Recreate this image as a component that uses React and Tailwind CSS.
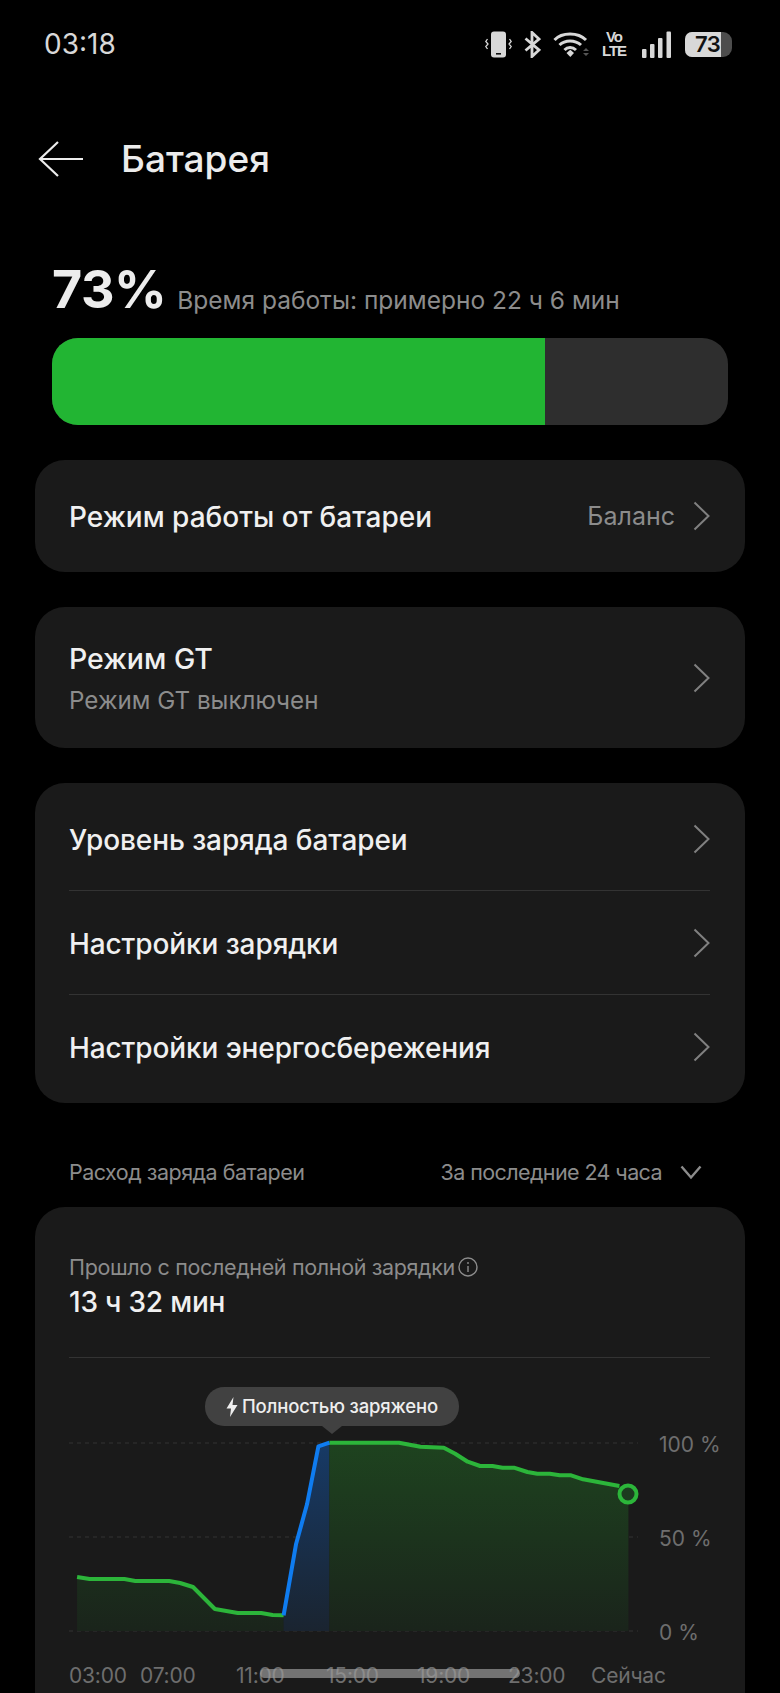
const toPoints = (list) =>
  list.map(([x, y]) => `${(x / 2.01 - 69).toFixed(1)},${(1370 + y / 3 - 1430).toFixed(1)}`).join(" ");

const greenA = [[155,618],[180,624],[250,624],[272,630],[340,630],[362,636],[388,648],[432,714],[478,726],[525,726],[548,732],[570,733]];
const blue = [[570,733],[595,520],[617,400],[640,226],[662,215]];
const greenB = [[662,215],[802,215],[845,227],[892,230],[915,248],[940,272],[965,285],[990,285],[1010,290],[1033,290],[1060,303],[1080,308],[1105,308],[1125,313],[1148,313],[1172,325],[1245,345],[1263,370]];

const closeArea = (list) => {
  const first = list[0][0] / 2.01 - 69;
  const last = list[list.length - 1][0] / 2.01 - 69;
  return `${first.toFixed(1)},200 ${toPoints(list)} ${last.toFixed(1)},200`;
};

function Chevron() {
  return (
    <svg width="17" height="30" viewBox="0 0 17 30" fill="none" stroke="#808080" strokeWidth="2" className="shrink-0">
      <path d="M1.500 1.500 L15.500 15 L1.500 28.500" />
    </svg>
  );
}

function Row({ title }) {
  return (
    <div className="flex h-[104px] items-center justify-between">
      <span className="pt-[2px] text-[28px] font-medium tracking-[-0.1px] text-[#f0f0f0]">{title}</span>
      <Chevron />
    </div>
  );
}

function StatusIcons() {
  return (
    <div className="flex items-center text-[#d8d8d8]">
      <svg width="27" height="27" viewBox="0 0 27 27" fill="none">
        <rect x="6" y="0.5" width="15" height="26" rx="3" fill="#d8d8d8" />
        <rect x="11" y="22" width="5" height="1.6" fill="#111" />
        <path d="M2.5 8 L0.8 10.5 L3 13 L0.8 15.5 L2.5 18 M24.5 8 L26.2 10.5 L24 13 L26.2 15.5 L24.5 18" stroke="#d8d8d8" strokeWidth="1.3" />
      </svg>
      <svg className="ml-3" width="17" height="27" viewBox="0 0 17 27" fill="none">
        <path d="M1.5 7.5 L15 19 L8 25.5 L8 1.5 L15 8 L1.5 19.5" stroke="#d8d8d8" strokeWidth="2.8" />
      </svg>
      <svg className="ml-3" width="37" height="27" viewBox="0 0 37 27" fill="none">
        <path d="M1.5 9 C9 1 25 1 33 9" stroke="#d8d8d8" strokeWidth="3" />
        <path d="M6.5 14 C12 8.500 22 8.500 28 14" stroke="#d8d8d8" strokeWidth="3" />
        <path d="M11.500 19 C14.500 15.800 19.500 15.800 23 19" stroke="#d8d8d8" strokeWidth="3" />
        <path d="M13.500 22 L17.300 18.800 L21 22 L17.300 26 Z" fill="#d8d8d8" />
        <path d="M30 20 L33 17 L36 20 Z M30 22 L36 22 L33 25 Z" fill="#555" />
      </svg>
      <div className="ml-3 flex w-[24px] flex-col items-center font-['Liberation_Sans',sans-serif] text-[15px] leading-[14px] font-bold tracking-[-1px]">
        <span>Vo</span>
        <span>LTE</span>
      </div>
      <svg className="ml-4" width="29" height="27" viewBox="0 0 29 27" fill="#d8d8d8">
        <rect x="0" y="18" width="4.500" height="9" rx="1" />
        <rect x="8" y="13" width="4.500" height="14" rx="1" />
        <rect x="16" y="7" width="4.500" height="20" rx="1" />
        <rect x="24.500" y="0.500" width="4.500" height="26.500" rx="1" />
      </svg>
      <div className="relative ml-[14px] flex h-[25px] w-[47px] items-center overflow-hidden rounded-l-[7px] rounded-r-[9px] bg-[#4d4d4d]">
        <div className="h-full w-[36px] bg-[#d8d8d8]" />
        <span className="absolute left-[10px] text-[22px] leading-none font-semibold tracking-[-0.5px] text-[#111]">73</span>
      </div>
    </div>
  );
}

export default function App() {
  return (
    <div className="h-[1693px] w-[780px] overflow-hidden bg-black font-['Inter',sans-serif]">
      <div className="flex items-center justify-between pt-[28px] pr-[48px] pl-[44px]">
        <span className="text-[28px] leading-8 text-[#d8d8d8]">03:18</span>
        <StatusIcons />
      </div>

      <div className="mt-[77px] flex items-center pl-[38px]">
        <svg width="46" height="36" viewBox="0 0 46 36" fill="none" stroke="#ececec" strokeWidth="2.2">
          <path d="M45 18 L2 18 M20 1 L2 18 L20 35" />
        </svg>
        <h1 className="ml-[37px] text-[37px] leading-[44px] font-medium text-[#ececec]">Батарея</h1>
      </div>

      <div className="mt-[79px] flex items-end px-[52px]">
        <span className="mb-[2px] text-[52px] leading-[60px] font-bold tracking-[-0.5px] text-[#ececec]">73%</span>
        <span className="mb-[6px] ml-[11px] text-[24.5px] leading-8 text-[#8c8c8c]">Время работы: примерно 22 ч 6 мин</span>
      </div>
      <div className="mx-[52px] mt-[16px] h-[87px] overflow-hidden rounded-[26px] bg-[#2e2e2e]">
        <div className="h-full w-[493px] bg-[#22b533]" />
      </div>

      <div className="mx-[35px] mt-[35px] flex flex-col gap-[35px]">
        <div className="flex h-[112px] items-center justify-between rounded-[30px] bg-[#1a1a1a] pr-[35px] pl-[34px]">
          <span className="pt-[2px] text-[28px] font-medium text-[#f0f0f0]">Режим работы от батареи</span>
          <div className="flex items-center gap-[18px]">
            <span className="pt-[2px] text-[25px] text-[#8c8c8c]">Баланс</span>
            <Chevron />
          </div>
        </div>

        <div className="flex h-[141px] items-center justify-between rounded-[30px] bg-[#1a1a1a] pr-[35px] pl-[34px]">
          <div className="pt-[3px]">
            <div className="text-[28.500px] leading-[40px] font-medium text-[#f0f0f0]">Режим GT</div>
            <div className="mt-[4px] text-[24.2px] leading-[36px] text-[#8c8c8c]">Режим GT выключен</div>
          </div>
          <Chevron />
        </div>

        <div className="divide-y divide-[#333] rounded-[30px] bg-[#1a1a1a] pt-[4px] pr-[35px] pb-[4px] pl-[34px]">
          <Row title="Уровень заряда батареи" />
          <Row title="Настройки зарядки" />
          <Row title="Настройки энергосбережения" />
        </div>
      </div>

      <div className="mt-[53px] flex items-center justify-between pr-[78px] pl-[69px]">
        <span className="text-[21.5px] leading-8 tracking-[-0.5px] text-[#8c8c8c]">Расход заряда батареи</span>
        <div className="flex items-center gap-[18px]">
          <span className="text-[21.5px] leading-8 tracking-[-0.6px] text-[#8c8c8c]">За последние 24 часа</span>
          <svg width="22" height="15" viewBox="0 0 22 15" fill="none" stroke="#8c8c8c" strokeWidth="2.400">
            <path d="M1.500 1.500 L11 12.500 L20.500 1.500" />
          </svg>
        </div>
      </div>

      <div className="relative mx-[35px] mt-[19px] h-[560px] rounded-t-[30px] bg-[#1a1a1a] pt-[44px] pr-[35px] pl-[34px]">
        <div className="flex items-center gap-[3px] text-[21.5px] leading-8 tracking-[-0.35px] text-[#8c8c8c]">
          Прошло с последней полной зарядки
          <svg width="20" height="20" viewBox="0 0 20 20" fill="none" stroke="#8c8c8c" strokeWidth="1.400">
            <circle cx="10" cy="10" r="9" />
            <path d="M10 9 L10 15 M10 5 L10 7" />
          </svg>
        </div>
        <div className="text-[28px] leading-[38px] font-medium tracking-[-0.2px] text-[#f0f0f0]">13 ч 32 мин</div>
        <div className="mt-[36px] h-px bg-[#333]" />

        <div className="mt-[73px] flex">
          <svg width="572" height="212" viewBox="0 0 572 212" fill="none" className="shrink-0">
            <defs>
              <linearGradient id="greenFade" gradientUnits="userSpaceOnUse" x1="0" y1="12" x2="0" y2="200">
                <stop offset="0" stopColor="#1e431f" />
                <stop offset="1" stopColor="#1a241b" />
              </linearGradient>
              <linearGradient id="blueFade" gradientUnits="userSpaceOnUse" x1="0" y1="12" x2="0" y2="200">
                <stop offset="0" stopColor="#173a66" />
                <stop offset="1" stopColor="#1a2430" />
              </linearGradient>
            </defs>
            <path d="M0 12 L569 12 M0 106 L569 106 M0 200 L569 200" stroke="#333" strokeWidth="1" strokeDasharray="4 4" />
            <polygon points={closeArea(greenA)} fill="url(#greenFade)" />
            <polygon points={closeArea(blue)} fill="url(#blueFade)" />
            <polygon points={closeArea(greenB)} fill="url(#greenFade)" />
            <polyline points={toPoints(greenA)} stroke="#2cb53a" strokeWidth="4" strokeLinejoin="round" />
            <polyline points={toPoints(greenB.slice(0, -1))} stroke="#2cb53a" strokeWidth="4" strokeLinejoin="round" />
            <polyline points={toPoints(blue)} stroke="#0f7cf0" strokeWidth="4" strokeLinejoin="round" />
            <circle cx="559" cy="63" r="8.500" fill="#1c3a1f" stroke="#2cb53a" strokeWidth="4" />
          </svg>
          <div className="mt-[-1px] ml-[18px] flex h-[218px] flex-col justify-between text-[21px] leading-[30px] whitespace-nowrap text-[#6e6e6e]">
            <span>100 %</span>
            <span>50 %</span>
            <span>0 %</span>
          </div>
        </div>

        <div className="mt-[12px] flex text-[21px] leading-8 tracking-[-0.2px] text-[#6e6e6e]">
          <span className="w-[71px]">03:00</span>
          <span className="w-[96px]">07:00</span>
          <span className="w-[90px]">11:00</span>
          <span className="w-[91px]">15:00</span>
          <span className="w-[91px]">19:00</span>
          <span className="w-[83px]">23:00</span>
          <span>Сейчас</span>
        </div>

        <div className="absolute top-[180px] left-[170px] flex h-[39px] w-[254px] items-center justify-center gap-[4px] rounded-[19px] bg-[#414141] text-[18.500px] font-medium tracking-[-0.15px] whitespace-nowrap text-[#eeeeee]">
          <svg width="12" height="20" viewBox="0 0 12 20" fill="#eeeeee">
            <path d="M7.500 0 L0.500 11.500 L5 11.500 L4 20 L11.500 8 L6.500 8 Z" />
          </svg>
          Полностью заряжено
          <div className="absolute top-full left-1/2 h-0 w-0 -translate-x-1/2 border-x-[10px] border-t-[8px] border-x-transparent border-t-[#414141]" />
        </div>

        <div className="absolute top-[462px] left-[225px] h-[9px] w-[260px] rounded-full bg-[#9a9a9a]/70" />
      </div>
    </div>
  );
}
